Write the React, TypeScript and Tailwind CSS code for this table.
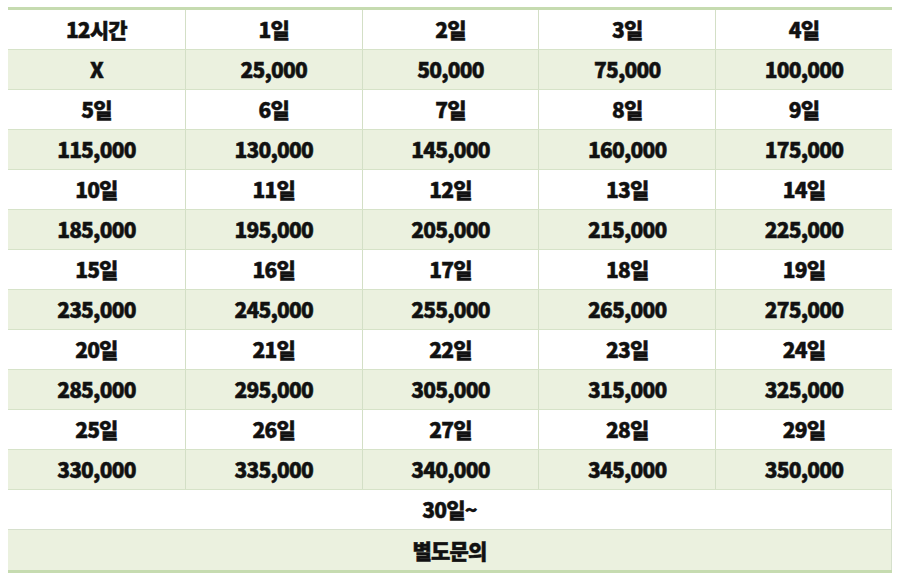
const rows: { cells: string[]; green: boolean }[] = [];

const days = [
  ["12시간", "1일", "2일", "3일", "4일"],
  ["5일", "6일", "7일", "8일", "9일"],
  ["10일", "11일", "12일", "13일", "14일"],
  ["15일", "16일", "17일", "18일", "19일"],
  ["20일", "21일", "22일", "23일", "24일"],
  ["25일", "26일", "27일", "28일", "29일"],
];

const prices = [
  ["X", "25,000", "50,000", "75,000", "100,000"],
  ["115,000", "130,000", "145,000", "160,000", "175,000"],
  ["185,000", "195,000", "205,000", "215,000", "225,000"],
  ["235,000", "245,000", "255,000", "265,000", "275,000"],
  ["285,000", "295,000", "305,000", "315,000", "325,000"],
  ["330,000", "335,000", "340,000", "345,000", "350,000"],
];

days.forEach((d, i) => {
  rows.push({ cells: d, green: false });
  rows.push({ cells: prices[i], green: true });
});

export default function App() {
  return (
    <div
      className="w-[903px] h-[585px] bg-white pl-[8px] pt-[7px] text-[#111] overflow-hidden"
      style={{ fontFamily: '"Noto Sans CJK KR", "Noto Sans", sans-serif' }}
    >
      <div className="w-[884px] border-t-[3px] border-b-[3px] border-[#c6dbb0]">
        {rows.map((row, r) => (
          <div
            key={r}
            className={`grid grid-cols-5 h-[40px] border-b border-[#d6e3c8] ${
              row.green ? "bg-[#ebf1df]" : "bg-white"
            }`}
          >
            {row.cells.map((c, i) => (
              <div
                key={i}
                className={`flex items-center justify-center text-[21px] font-black tracking-[-0.8px] leading-none [-webkit-text-stroke:0.5px_#111] ${
                  i > 0 ? "border-l border-[#d3dfc6]" : ""
                }`}
              >
                {c}
              </div>
            ))}
          </div>
        ))}
        <div className="h-[40px] flex items-center justify-center border-b border-r border-[#d6e0cc] bg-white text-[21px] font-black tracking-[-0.8px] leading-none [-webkit-text-stroke:0.5px_#111]">
          30일~
        </div>
        <div className="h-[40px] flex items-center justify-center border-r border-[#d6e0cc] bg-[#ebf1df] text-[21px] font-black tracking-[-0.8px] leading-none [-webkit-text-stroke:0.5px_#111]">
          별도문의
        </div>
      </div>
    </div>
  );
}
